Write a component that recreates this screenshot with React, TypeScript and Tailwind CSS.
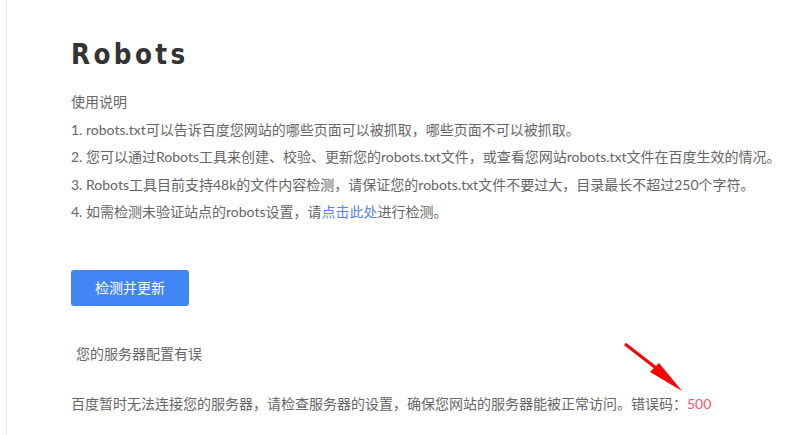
import React from 'react';

const notes = [
  '1. robots.txt可以告诉百度您网站的哪些页面可以被抓取，哪些页面不可以被抓取。',
  '2. 您可以通过Robots工具来创建、校验、更新您的robots.txt文件，或查看您网站robots.txt文件在百度生效的情况。',
  '3. Robots工具目前支持48k的文件内容检测，请保证您的robots.txt文件不要过大，目录最长不超过250个字符。',
];

const App: React.FC = () => {
  return (
    <div className="relative w-full h-[435px] bg-white overflow-hidden font-['Lato','Noto_Sans_CJK_SC',sans-serif]">
      <div className="ml-[6px] h-full border-l border-[#ececec] pl-[64px] pt-[34px]">
        {/* Title */}
        <h1 className="font-['DejaVu_Sans_Condensed','DejaVu_Sans',sans-serif] font-bold text-[27.5px] leading-[40px] tracking-[3.4px] text-[#333]">
          Robots
        </h1>

        {/* Usage notes */}
        <div className="mt-[14px] text-[14px] leading-[27.5px] text-[#666] whitespace-nowrap">
          <p>使用说明</p>
          {notes.map((n) => (
            <p key={n}>{n}</p>
          ))}
          <p>
            4. 如需检测未验证站点的robots设置，请<a className="text-[#5b7ef2]">点击此处</a>进行检测。
          </p>
        </div>

        <button className="mt-[44px] w-[118px] h-[36px] rounded-[3px] bg-[#4285f4] text-white text-[14px] leading-[36px]">
          检测并更新
        </button>

        {/* Result */}
        <p className="mt-[38px] pl-[5px] text-[14px] leading-[20px] text-[#666]">您的服务器配置有误</p>
        <p className="mt-[30px] text-[14px] leading-[20px] text-[#666] whitespace-nowrap">
          百度暂时无法连接您的服务器，请检查服务器的设置，确保您网站的服务器能被正常访问。错误码：
          <span className="text-[#f5586c]">500</span>
        </p>
      </div>

      {/* annotation arrow */}
      <svg className="absolute left-0 top-0 pointer-events-none" width="787" height="435">
        <line x1="625" y1="344" x2="656" y2="368" stroke="#ff0000" strokeWidth="3" />
        <polygon points="650,372 659,363 682,391" fill="#ff0000" />
      </svg>
    </div>
  );
};

export default App;
